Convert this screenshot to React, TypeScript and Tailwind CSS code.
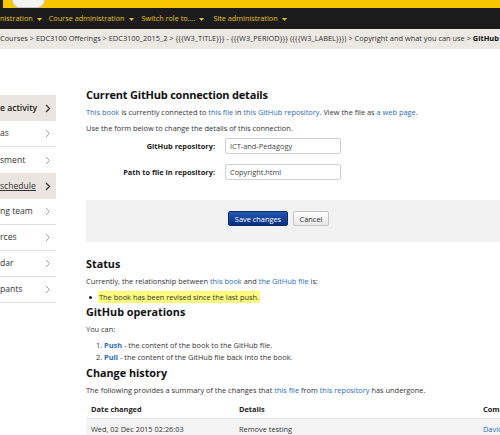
import React from 'react'

const sideItems = [
  { label: 'e activity', active: true, bold: true },
  { label: 'as' },
  { label: 'sment' },
  { label: 'schedule', active: true, underline: true },
  { label: 'ng team' },
  { label: 'rces' },
  { label: 'dar' },
  { label: 'pants' },
]

function Caret() {
  return (
    <svg width="5" height="3" viewBox="0 0 5 3" className="ml-[4px] mt-[1px]">
      <path d="M0 0h5L2.5 3z" fill="#e9c31c" />
    </svg>
  )
}

function Chevron({ dark }: { dark?: boolean }) {
  return (
    <svg width="6" height="9" viewBox="0 0 6 9">
      <path
        d="M1 1l3.5 3.5L1 8"
        fill="none"
        stroke={dark ? '#333' : '#9a9a9a'}
        strokeWidth={dark ? 1.3 : 0.9}
      />
    </svg>
  )
}

function A({ children, bold }: { children: React.ReactNode; bold?: boolean }) {
  return <span className={`text-[#2b6cb5] ${bold ? 'font-bold' : ''}`}>{children}</span>
}

export default function App() {
  return (
    <div className="w-[500px] h-[435px] overflow-hidden bg-white font-['Open_Sans',sans-serif] text-[#333]">
      {/* top yellow strip */}
      <div className="h-[8px] bg-[#f7c600] flex">
        <div className="w-[3px] bg-[#222]" />
        <div className="ml-[9px] w-[33px] h-[8px] bg-[#f3f3f3] rounded-b-[12px] border-x border-b border-[#c9c9c9]" />
      </div>

      {/* nav bar */}
      <div className="h-[21px] bg-[#1b1b1b] flex items-center text-[7.3px] text-[#e9c31c] whitespace-nowrap">
        <div className="flex items-center">nistration<Caret /></div>
        <div className="flex items-center ml-[7px]">Course administration<Caret /></div>
        <div className="flex items-center ml-[8px]">Switch role to....<Caret /></div>
        <div className="flex items-center ml-[9px]">Site administration<Caret /></div>
      </div>

      {/* breadcrumb */}
      <div className="h-[20px] bg-[#ece8e3] flex items-center text-[7.4px] text-[#333] whitespace-nowrap overflow-hidden">
        Courses &gt; EDC3100 Offerings &gt; EDC3100_2015_2 &gt; {'{{{W3_TITLE}}}'} - {'{{{W3_PERIOD}}}'} ({'{{{W3_LABEL}}}'}) &gt; Copyright and what you can use &gt;&nbsp;<b className="text-[#111]">GitHub tools</b>
      </div>

      <div className="flex">
        {/* sidebar */}
        <div className="w-[56px] shrink-0 mt-[46px]">
          {sideItems.map((it, i) => (
            <div
              key={i}
              className={`h-[26px] flex items-center justify-between pr-[5px] text-[8.6px] whitespace-nowrap ${
                it.active ? 'bg-[#ebe5df]' : 'bg-white'
              } ${i < sideItems.length - 1 && !it.active && !sideItems[i + 1].active ? 'border-b border-[#dedede]' : ''} ${
                i === sideItems.length - 1 ? 'border-b border-[#dedede]' : ''
              }`}
            >
              <span className={`${it.bold ? 'font-semibold text-[#222]' : 'text-[#333]'} ${it.underline ? 'underline' : ''}`}>
                {it.label}
              </span>
              <Chevron dark={it.active} />
            </div>
          ))}
        </div>

        {/* main */}
        <div className="ml-[30px] w-[560px] shrink-0 text-[7.4px] leading-[12px]">
          <h2 className="mt-[39px] text-[11px] leading-[14px] font-bold text-[#111] tracking-[-0.2px]">
            Current GitHub connection details
          </h2>
          <p className="mt-[4px]">
            <A>This book</A> is currently connected to <A>this file</A> in <A>this GitHub repository</A>. View the file as <A>a web page</A>.
          </p>
          <p className="mt-[4px]">Use the form below to change the details of this connection.</p>

          <div className="mt-[4px] flex items-center">
            <div className="w-[129px] text-right font-bold text-[#222]">GitHub repository:</div>
            <div className="ml-[10px] w-[116px] h-[16px] border border-[#cfcfcf] rounded-[2px] flex items-center px-[4px] text-[#444]">
              ICT-and-Pedagogy
            </div>
          </div>
          <div className="mt-[10px] flex items-center">
            <div className="w-[129px] text-right font-bold text-[#222]">Path to file in repository:</div>
            <div className="ml-[10px] w-[116px] h-[16px] border border-[#cfcfcf] rounded-[2px] flex items-center px-[4px] text-[#444]">
              Copyright.html
            </div>
          </div>

          <div className="mt-[20px] h-[42px] bg-[#f2f2f2] pt-[11px] flex items-start">
            <div className="ml-[142px] w-[60px] h-[15px] rounded-[2px] bg-gradient-to-b from-[#2457b0] to-[#0a2f80] border border-[#0a2a70] text-white flex items-center justify-center text-[7.4px]">
              Save changes
            </div>
            <div className="ml-[5px] w-[36px] h-[15px] rounded-[2px] bg-gradient-to-b from-white to-[#e8e8e8] border border-[#c4c4c4] text-[#333] flex items-center justify-center text-[7.4px]">
              Cancel
            </div>
          </div>

          <h3 className="mt-[15px] text-[10.8px] leading-[14px] font-bold text-[#111]">Status</h3>
          <p className="mt-[4px]">
            Currently, the relationship between <A>this book</A> and <A>the GitHub file</A> is:
          </p>
          <div className="mt-[4px] flex items-center">
            <span className="ml-[3px] w-[3px] h-[3px] rounded-full bg-[#222]" />
            <span className="ml-[6px] bg-[#fbfb7e] px-[1px]">The book has been revised since the last push.</span>
          </div>

          <h3 className="mt-[2px] text-[10.8px] leading-[14px] font-bold text-[#111]">GitHub operations</h3>
          <p className="mt-[4px]">You can:</p>
          <div className="mt-[4px] pl-[10px]">
            <div>
              1. <A bold>Push</A> - the content of the book to the GitHub file.
            </div>
            <div>
              2. <A bold>Pull</A> - the content of the GitHub file back into the book.
            </div>
          </div>

          <h3 className="mt-[3px] text-[10.8px] leading-[14px] font-bold text-[#111]">Change history</h3>
          <p className="mt-[4px]">
            The following provides a summary of the changes that <A>this file</A> from <A>this repository</A> has undergone.
          </p>

          <div className="mt-[4px]">
            <div className="h-[18px] flex items-center font-bold text-[#222]">
              <div className="w-[153px] pl-[5px]">Date changed</div>
              <div className="w-[244px]">Details</div>
              <div>Comments</div>
            </div>
            <div className="h-[20px] flex items-center bg-[#f4f4f4] border-t border-[#e6e6e6]">
              <div className="w-[153px] pl-[5px]">Wed, 02 Dec 2015 02:26:03</div>
              <div className="w-[244px]">Remove testing</div>
              <div>
                <A>David Jones</A>
              </div>
            </div>
          </div>
        </div>
      </div>
    </div>
  )
}
